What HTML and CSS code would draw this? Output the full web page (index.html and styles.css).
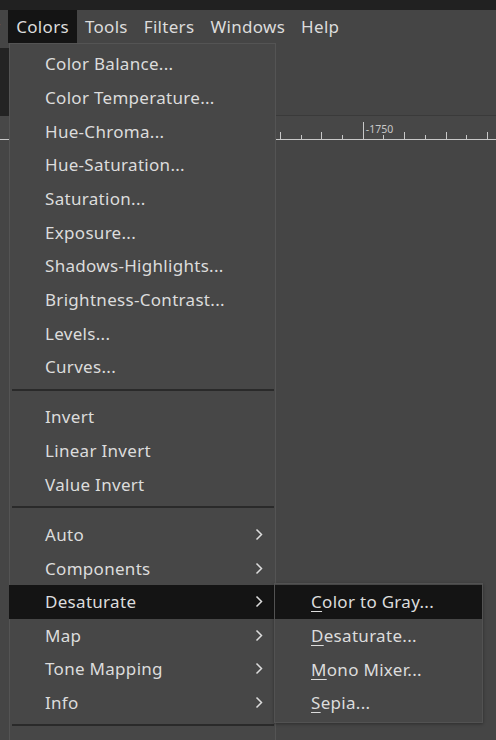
FILE: index.html
```html
<!DOCTYPE html>
<html>
<head>
<meta charset="utf-8">
<link rel="stylesheet" href="styles.css">
</head>
<body>
<div class="topbar"></div>
<div class="menubar">
  <div class="mb-item mb-cut">Layer</div>
  <div class="mb-item active">Colors</div>
  <div class="mb-item">Tools</div>
  <div class="mb-item">Filters</div>
  <div class="mb-item">Windows</div>
  <div class="mb-item">Help</div>
</div>
<div class="workspace">
  <div class="toolrow">
    <div class="leftpanel"></div>
  </div>
  <div class="ruler">
    <div class="ticks">
      <span class="tick tall"></span>
      <span class="tick short"></span>
      <span class="tick tall"></span>
      <span class="tick short"></span>
      <span class="tick major"><span class="rlabel">-1750</span></span>
      <span class="tick short"></span>
      <span class="tick tall"></span>
      <span class="tick short"></span>
      <span class="tick tall"></span>
      <span class="tick short"></span>
      <span class="tick tall"></span>
    </div>
  </div>
  <div class="canvas"></div>
</div>

<div class="menu">
  <div class="item">Color Balance...</div>
  <div class="item">Color Temperature...</div>
  <div class="item">Hue-Chroma...</div>
  <div class="item">Hue-Saturation...</div>
  <div class="item">Saturation...</div>
  <div class="item">Exposure...</div>
  <div class="item">Shadows-Highlights...</div>
  <div class="item">Brightness-Contrast...</div>
  <div class="item">Levels...</div>
  <div class="item">Curves...</div>
  <div class="sep"></div>
  <div class="item">Invert</div>
  <div class="item">Linear Invert</div>
  <div class="item">Value Invert</div>
  <div class="sep"></div>
  <div class="item sub">Auto<svg class="chev" viewBox="0 0 8 13"><polyline points="1.5,1.5 6.5,6.5 1.5,11.5"/></svg></div>
  <div class="item sub">Components<svg class="chev" viewBox="0 0 8 13"><polyline points="1.5,1.5 6.5,6.5 1.5,11.5"/></svg></div>
  <div class="item sub hl">Desaturate<svg class="chev" viewBox="0 0 8 13"><polyline points="1.5,1.5 6.5,6.5 1.5,11.5"/></svg></div>
  <div class="item sub">Map<svg class="chev" viewBox="0 0 8 13"><polyline points="1.5,1.5 6.5,6.5 1.5,11.5"/></svg></div>
  <div class="item sub">Tone Mapping<svg class="chev" viewBox="0 0 8 13"><polyline points="1.5,1.5 6.5,6.5 1.5,11.5"/></svg></div>
  <div class="item sub">Info<svg class="chev" viewBox="0 0 8 13"><polyline points="1.5,1.5 6.5,6.5 1.5,11.5"/></svg></div>
  <div class="sep"></div>
</div>

<div class="submenu">
  <div class="sitem hl"><u>C</u>olor to Gray...</div>
  <div class="sitem"><u>D</u>esaturate...</div>
  <div class="sitem"><u>M</u>ono Mixer...</div>
  <div class="sitem"><u>S</u>epia...</div>
</div>
</body>
</html>
```

FILE: styles.css
```css
html, body {
  margin: 0;
  padding: 0;
}
body {
  width: 496px;
  height: 740px;
  overflow: hidden;
  background: #454545;
  font-family: "Noto Sans", "DejaVu Sans", sans-serif;
  font-size: 17px;
  letter-spacing: 0.3px;
  color: #dcdcdc;
  position: relative;
}
.topbar {
  height: 10px;
  background: #212121;
}
.menubar {
  height: 33px;
  display: flex;
  align-items: stretch;
  background: #454545;
  margin-left: -53px;
}
.mb-item {
  padding: 0 8px;
  display: flex;
  align-items: center;
  line-height: 1;
}
.mb-item.active {
  background: #141414;
}
.workspace {
  display: flex;
  flex-direction: column;
}
.toolrow {
  height: 73px;
  border-bottom: 1px solid #3a3a3a;
  box-sizing: border-box;
  display: flex;
}
.leftpanel {
  width: 9px;
  margin-top: 5px;
  height: 68px;
  background: #232323;
}
.ruler {
  height: 24px;
  background: #474747;
  display: flex;
  align-items: flex-end;
}
.ticks {
  width: 100%;
  height: 21px;
  border-bottom: 1px solid #c8c8c8;
  display: flex;
  align-items: flex-end;
  padding-left: 280px;
  gap: 19.7px;
}
.tick {
  width: 1px;
  background: #c8c8c8;
  position: relative;
  flex: none;
}
.tick.tall { height: 7px; }
.tick.short { height: 4px; }
.tick.major { height: 17px; }
.rlabel {
  position: absolute;
  left: 3px;
  top: 2px;
  font-size: 10.5px;
  letter-spacing: 0;
  line-height: 1;
  color: #c8c8c8;
}
.canvas {
  flex: 1;
}
.menu {
  position: absolute;
  left: 9px;
  top: 43px;
  width: 267px;
  height: 720px;
  box-sizing: border-box;
  background: #474747;
  border: 1px solid #545454;
  border-bottom: none;
  padding-top: 3px;
}
.item {
  height: 33.67px;
  display: flex;
  align-items: center;
  padding-left: 35px;
  padding-right: 12px;
  white-space: nowrap;
}
.item.sub {
  justify-content: space-between;
}
.item.hl {
  background: #141414;
  margin: 0 -1px;
  padding-left: 36px;
  padding-right: 13px;
}
.chev {
  width: 8px;
  height: 13px;
  fill: none;
  stroke: #dcdcdc;
  stroke-width: 1.5;
}
.sep {
  height: 2px;
  background: #2a2a2a;
  margin: 5px 1px 9.5px 2px;
}
.submenu {
  position: absolute;
  left: 274px;
  top: 583px;
  width: 209px;
  box-sizing: border-box;
  background: #474747;
  border: 1px solid #525252;
  padding: 1px 0 2px;
  box-shadow: 0 1px 3px rgba(0,0,0,0.35);
}
.sitem {
  height: 33.67px;
  display: flex;
  align-items: center;
  padding-left: 36px;
  white-space: nowrap;
}
.sitem.hl {
  background: #141414;
}
.sitem u {
  text-underline-offset: 3px;
}
```
